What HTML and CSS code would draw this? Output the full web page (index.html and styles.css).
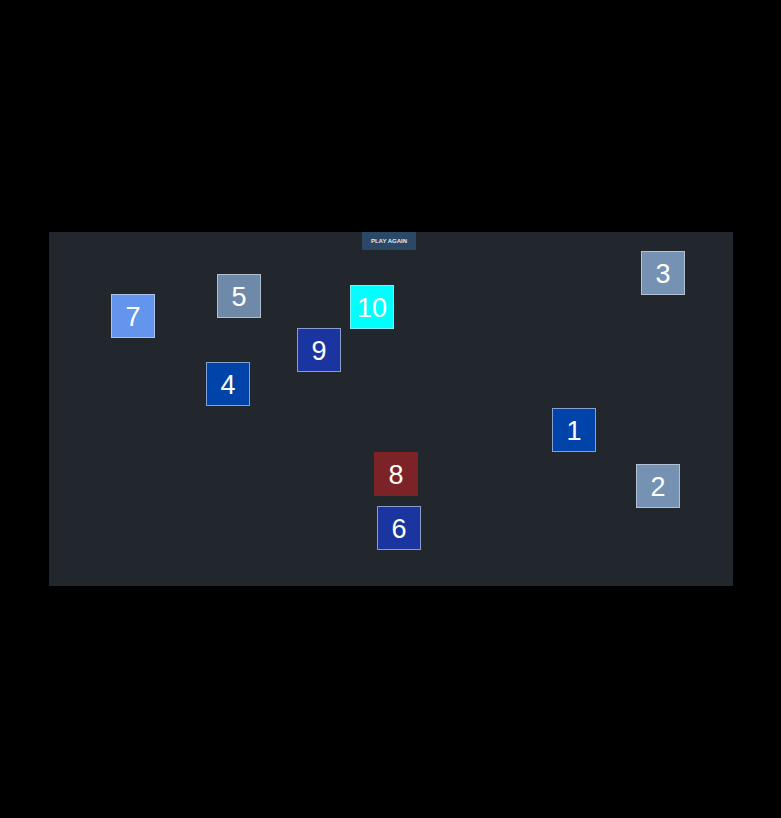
FILE: index.html
```html
<!DOCTYPE html>
<html lang="en">
<head>
  <meta charset="UTF-8">
  <title>Number Tiles</title>
  <link rel="stylesheet" href="styles.css">
</head>
<body>

  <div class="board">
    <button class="replay" type="button">PLAY AGAIN</button>

    <div class="tile slate" style="left: 592px; top: 19px;">3</div>
    <div class="tile slate dim" style="left: 168px; top: 42px;">5</div>
    <div class="tile aqua" style="left: 301px; top: 53px;">10</div>
    <div class="tile cornflower" style="left: 62px; top: 62px;">7</div>
    <div class="tile navy" style="left: 248px; top: 96px;">9</div>
    <div class="tile cobalt" style="left: 157px; top: 130px;">4</div>
    <div class="tile cobalt" style="left: 503px; top: 176px;">1</div>
    <div class="tile maroon" style="left: 325px; top: 220px;">8</div>
    <div class="tile slate" style="left: 587px; top: 232px;">2</div>
    <div class="tile navy" style="left: 328px; top: 274px;">6</div>
  </div>

</body>
</html>
```

FILE: styles.css
```css
body {
  margin: 0;
  background-color: #000;
  font-family: "Liberation Sans", Arial, sans-serif;
}
.board {
  position: relative;
  width: 684px;
  height: 354px;
  margin: 232px 0 0 49px;
  background-color: #22272e;
  display: flex;
  justify-content: center;
  align-items: flex-start;
}
.replay {
  width: 54px;
  height: 18px;
  margin-left: -4px;
  padding: 0;
  border: none;
  background-color: #2b4966;
  color: #e4e8ee;
  font-family: "Liberation Sans", Arial, sans-serif;
  font-size: 6px;
  font-weight: bold;
  cursor: pointer;
}
.tile {
  position: absolute;
  box-sizing: border-box;
  width: 44px;
  height: 44px;
  padding-top: 2px;
  border: 1px solid rgba(220, 225, 235, 0.6);
  color: #fff;
  font-size: 27px;
  display: flex;
  align-items: center;
  justify-content: center;
}
.slate {
  background-color: #7592b2;
}
.dim {
  background-color: #6f8aa8;
}
.aqua {
  background-color: #00ffff;
}
.cornflower {
  background-color: #6495ed;
}
.navy {
  background-color: #1a34a0;
}
.cobalt {
  background-color: #0044aa;
}
.maroon {
  background-color: #7b2326;
  border-color: transparent;
}
```
